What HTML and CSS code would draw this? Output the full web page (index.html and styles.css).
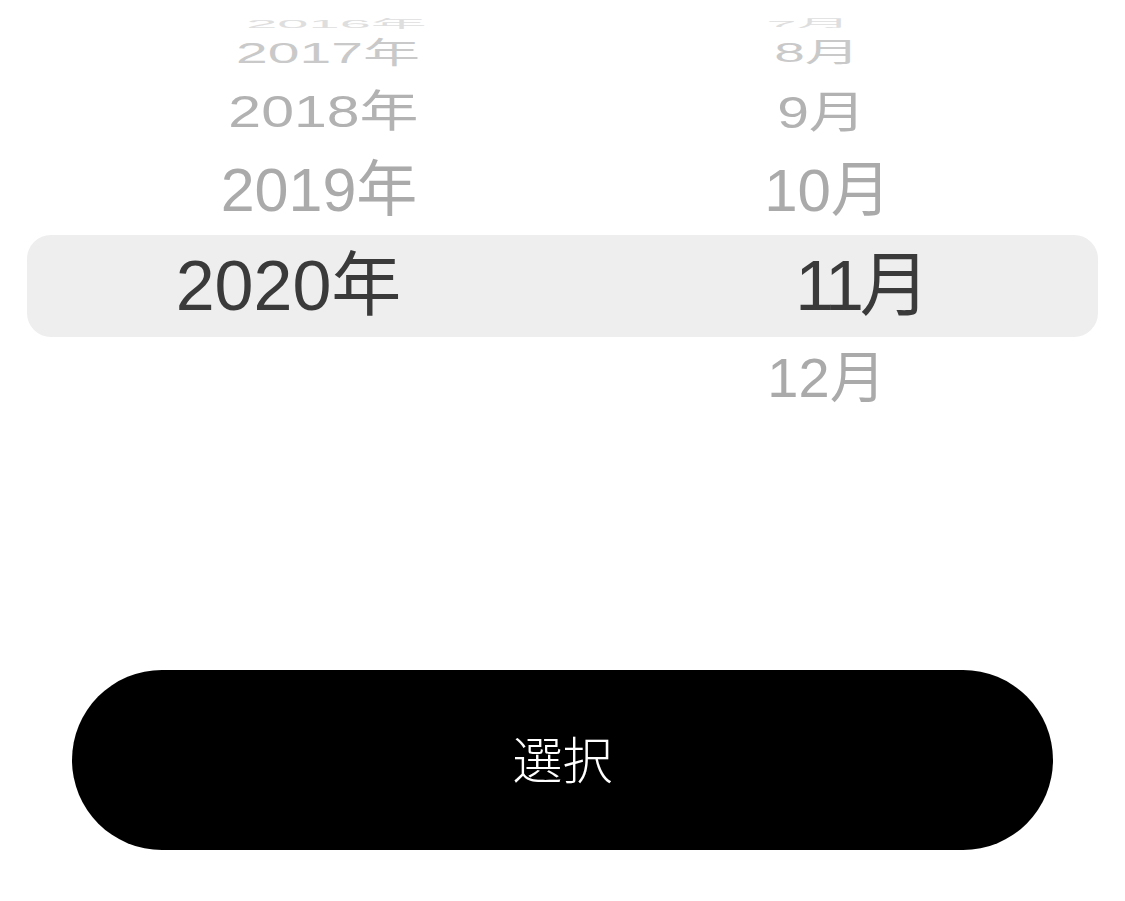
FILE: index.html
```html
<!DOCTYPE html>
<html lang="ja">
<head>
    <meta charset="UTF-8">
    <meta name="viewport" content="width=device-width, initial-scale=1.0">
    <title>年月を選択</title>
    <link rel="stylesheet" href="styles.css">
</head>
<body>

<div class="picker">
    <div class="row row-a">
        <div class="cell year">2016年</div>
        <div class="cell month">7月</div>
    </div>
    <div class="row row-b">
        <div class="cell year">2017年</div>
        <div class="cell month">8月</div>
    </div>
    <div class="row row-c">
        <div class="cell year">2018年</div>
        <div class="cell month">9月</div>
    </div>
    <div class="row row-d">
        <div class="cell year">2019年</div>
        <div class="cell month">10月</div>
    </div>
    <!-- fila seleccionada -->
    <div class="row row-selected">
        <div class="cell year">2020年</div>
        <div class="cell month">11月</div>
    </div>
    <div class="row row-e">
        <div class="cell year"></div>
        <div class="cell month">12月</div>
    </div>
</div>

<button class="select-button">選択</button>

</body>
</html>
```

FILE: styles.css
```css
body {
    margin: 0;
    font-family: "Liberation Sans", "Noto Sans CJK JP", sans-serif;
    background: #fff;
}
.picker {
    padding-top: 22px;
}
.row {
    display: grid;
    grid-template-columns: 400px 400px;
    column-gap: 167px;
    margin: 0 27px;
    padding-left: 61.5px;
    color: #aaaaaa;
    white-space: nowrap;
}
.cell {
    text-align: center;
}
/* filas de la rueda: se comprimen hacia arriba */
.row-a {
    height: 4px;
    line-height: 4px;
    font-size: 56px;
    color: #dedede;
}
.row-a .year { transform: translateX(48px) scaleY(0.2); }
.row-a .month { transform: translateX(-47px) scaleY(0.18); font-size: 54px; }
.row-b {
    height: 53px;
    line-height: 53px;
    font-size: 57px;
    color: #c9c9c9;
}
.row-b .year { transform: translateX(39.5px) scaleY(0.52); }
.row-b .month { transform: translateX(-38.5px) scaleY(0.5); font-size: 55px; }
.row-c {
    height: 67px;
    line-height: 67px;
    font-size: 59px;
    color: #b2b2b2;
}
.row-c .year { transform: translateX(35px) scaleY(0.75); }
.row-c .month { transform: translateX(-34px) scaleY(0.77); font-size: 57px; }
.row-d {
    height: 89px;
    line-height: 89px;
    font-size: 61px;
    color: #aaaaaa;
}
.row-d .year { transform: translateX(30.5px); }
.row-d .month { transform: translateX(-28px); font-size: 60px; }
.row-selected {
    height: 102px;
    line-height: 102px;
    font-size: 70px;
    color: #3a3a3a;
    background-color: #eeeeee;
    border-radius: 24px;
}
.row-selected .month {
    letter-spacing: -4px;
    padding-left: 10px;
}
.row-e {
    height: 82px;
    line-height: 82px;
    font-size: 56px;
    color: #aaaaaa;
}
.row-e .month { transform: translateX(-29px); }
.select-button {
    display: block;
    width: calc(100% - 144px);
    height: 180px;
    margin: 251px 72px 0;
    border: none;
    border-radius: 90px;
    background-color: #000;
    color: #fff;
    font-family: "Noto Sans CJK JP", sans-serif;
    font-size: 50px;
    font-weight: 300;
    padding: 0 0 6px;
}
```
